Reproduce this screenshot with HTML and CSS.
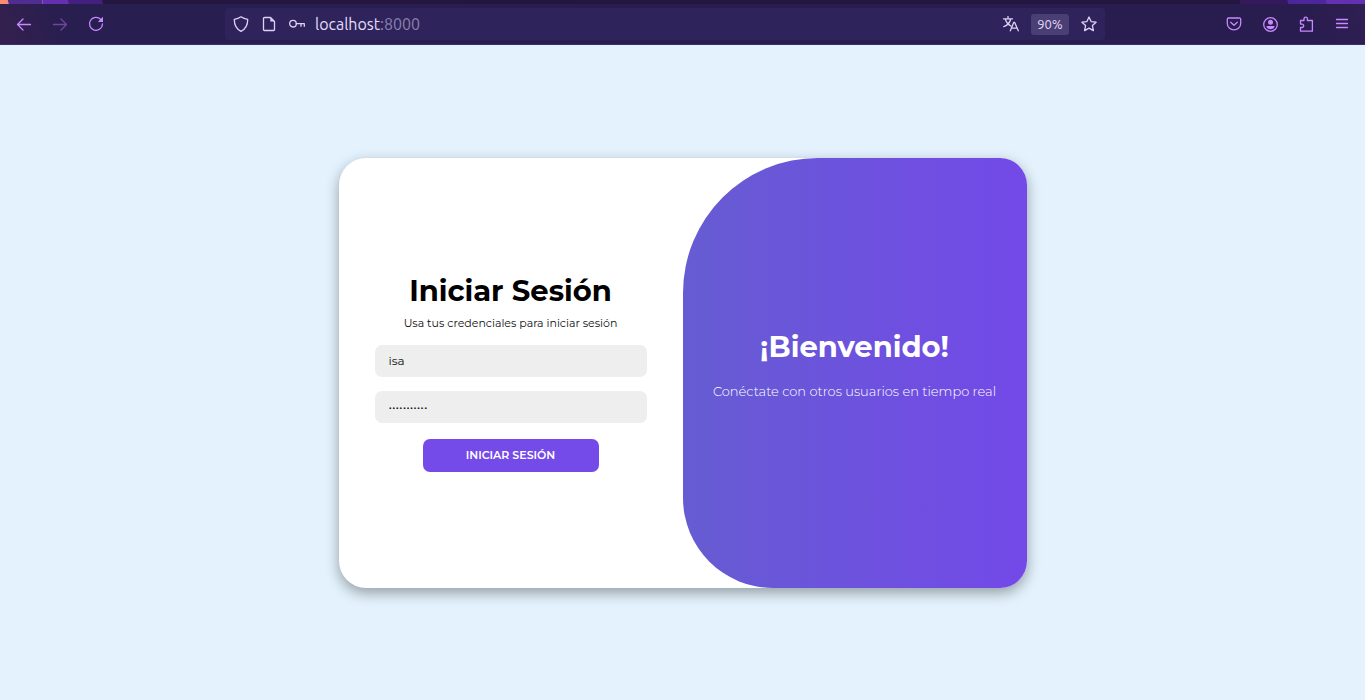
FILE: index.html
```html
<!DOCTYPE html>
<html lang="es">
<head>
<meta charset="utf-8">
<meta name="viewport" content="width=device-width, initial-scale=1">
<title>Iniciar Sesión</title>
<link rel="stylesheet" href="styles.css">
</head>
<body>
<header class="browser">
  <div class="tab-strip"></div>
  <div class="toolbar">
    <div class="nav-group">
      <button class="icon-button" type="button" aria-label="Atrás"><svg viewBox="0 0 16 16"><path d="M14.500 8.500H1.500M7 3 1.500 8.500 7 14"/></svg></button>
      <button class="icon-button dim" type="button" aria-label="Adelante"><svg viewBox="0 0 16 16"><path d="M1.500 8.500h13M9 3l5.500 5.500L9 14"/></svg></button>
      <button class="icon-button" type="button" aria-label="Recargar"><svg viewBox="0 0 16 16"><path d="M12.600 3.200A6.500 6.500 0 1 0 14.500 8"/><path class="solid" d="M15 .8V6H9.800z"/></svg></button>
    </div>
    <div class="url-bar">
      <svg viewBox="0 0 16 16"><path d="M8 .8c2 1.400 4.200 2.200 6.700 2.500C14.800 8.700 13 12.800 8 15.300 3 12.800 1.200 8.700 1.300 3.300 3.800 3 6 2.200 8 .8z"/></svg>
      <svg viewBox="0 0 16 16"><path d="M9.500 1.500h-6a1 1 0 0 0-1 1v11a1 1 0 0 0 1 1h9a1 1 0 0 0 1-1v-8z"/><path class="solid" d="M9.300 1v4.500h4.500z"/></svg>
      <svg viewBox="0 0 16 16"><circle cx="4" cy="7.700" r="3.300"/><path d="M7.300 7.700h8v2.600M12 7.700v2.600"/></svg>
      <span class="address">localhost<span class="port">:8000</span></span>
      <svg viewBox="0 0 16 16"><path d="M.5 2.800h9M5 .5v2.300M2.300 3c.8 3 3 5.500 5.500 7M7.700 3C7 6.500 4.300 9.300.8 10.700M7.300 14.800l3.500-8.500h.8l3.700 8.500M8.600 12.200h5.600"/></svg>
      <button class="zoom-level" type="button">90%</button>
      <svg viewBox="0 0 16 16"><path d="m8 1 2.100 4.600 5 .6-3.700 3.400 1 5L8 12.100l-4.400 2.500 1-5L.9 6.200l5-.6z"/></svg>
    </div>
    <div class="nav-group end">
      <button class="icon-button" type="button" aria-label="Pocket"><svg viewBox="0 0 16 16"><path d="M2.500 2h11a1.200 1.200 0 0 1 1.200 1.200v4.300a6.700 6.300 0 0 1-13.400 0V3.200A1.200 1.200 0 0 1 2.500 2zM4.700 6.200 8 9.300l3.300-3.100"/></svg></button>
      <button class="icon-button" type="button" aria-label="Cuenta"><svg viewBox="0 0 16 16"><circle cx="8.500" cy="8.500" r="6.800"/><circle class="solid" cx="8.500" cy="6.300" r="2.500"/><path class="solid" d="M4.300 9.900h8.400c-.4 2-2 3.300-4.200 3.300s-3.800-1.300-4.200-3.300z"/></svg></button>
      <button class="icon-button" type="button" aria-label="Extensiones"><svg viewBox="0 0 16 16"><path d="M2.500 7V4.500H6V2.800a1.700 1.700 0 0 1 3.400 0v1.700h5v10.700H2.500v-3.700H4a1.700 1.700 0 0 0 0-3.400H2.500z"/></svg></button>
      <button class="icon-button" type="button" aria-label="Menú"><svg viewBox="0 0 16 16"><path d="M2.500 3.500h11M2.500 7.500h11M2.500 11.500h11"/></svg></button>
    </div>
  </div>
</header>
<main class="page">
  <div class="card">
    <form class="login">
      <h1 class="title">Iniciar Sesión</h1>
      <p class="hint">Usa tus credenciales para iniciar sesión</p>
      <input class="field" type="text" value="isa" aria-label="Usuario">
      <input class="field password" type="password" value="contrasenia" aria-label="Contraseña">
      <button class="submit" type="button">INICIAR SESIÓN</button>
    </form>
    <section class="welcome">
      <h2 class="title">¡Bienvenido!</h2>
      <p class="tagline">Conéctate con otros usuarios en tiempo real</p>
    </section>
  </div>
</main>
</body>
</html>
```
FILE: styles.css
```css
* { box-sizing: border-box; margin: 0; }

body {
  min-height: 100vh;
  display: flex;
  flex-direction: column;
  background: #e3f2fd;
  font-family: Montserrat, Inter, sans-serif;
}

button { border: 0; cursor: pointer; }

.browser {
  background: #291d4f;
  border-bottom: 1px solid #3c2c70;
  font-family: Ubuntu, "Noto Sans", sans-serif;
}

.tab-strip {
  height: 4px;
  background: linear-gradient(75deg, #ff8b73 8px, #4f2d91 9px, #4f2d91 41px, #8054b3 41px, #8054b3 42px, #6430b0 42px, #6430b0 66px, #432080 67px, #432080 99px, #251541 100px, #251541 1198px, #35195d 1199px, #35195d 1244px, #4c269a 1245px, #4c269a 1281px, #6330b1 1282px);
}

.toolbar {
  display: grid;
  grid-template-columns: 225px 1fr 260px;
  align-items: center;
  padding: 4px 0;
  background: linear-gradient(75deg, #35204e, #291e50 60px, #291c4e 1270px, #2f1f54);
}

.toolbar svg {
  width: 16px;
  height: 16px;
  flex: none;
  display: block;
  fill: none;
  stroke: currentColor;
  stroke-width: 1.3;
  stroke-linecap: round;
  stroke-linejoin: round;
}

.toolbar .solid { fill: currentColor; stroke: none; }

.nav-group { display: flex; gap: 20px; padding: 0 16px; }
.nav-group.end { justify-content: flex-end; padding: 0 15px; }

.icon-button { padding: 0; background: none; color: #c689ff; }
.icon-button.dim { color: #70479b; }

.url-bar {
  height: 32px;
  display: flex;
  align-items: center;
  gap: 12px;
  padding: 0 8px;
  border-radius: 4px;
  background: #2e245b;
  color: #ddd2f5;
}

.address { flex: 1; margin-left: -2px; font-size: 16px; line-height: 20px; color: #e5ddf8; }
.port { color: #8c81ad; }

.zoom-level {
  width: 38px;
  height: 21px;
  padding: 0;
  border-radius: 3px;
  background: #4a3f74;
  color: #e2d8f6;
  font: 13px/21px Ubuntu, "Noto Sans", sans-serif;
}

.page {
  flex: 1;
  display: flex;
  align-items: center;
  justify-content: center;
  padding: 24px;
}

.card {
  width: 100%;
  max-width: 688px;
  min-height: 430px;
  display: grid;
  grid-template-columns: 1fr 1fr;
  overflow: hidden;
  border-radius: 27px;
  background: #fff;
  box-shadow: 0 5px 14px rgba(0, 0, 0, .35);
}

.login {
  display: flex;
  flex-direction: column;
  justify-content: center;
  padding: 0 36px;
  color: #000;
}

.title { font-size: 29px; line-height: 36px; font-weight: 700; text-align: center; }

.hint {
  margin: 6px 0 14px;
  font-size: 11px;
  line-height: 16px;
  text-align: center;
  color: #111;
}

.field {
  width: 100%;
  height: 32px;
  margin-bottom: 14px;
  padding: 0 14px 2px;
  border: 0;
  border-radius: 7px;
  outline: 0;
  background: #eee;
  color: #111;
  font: 12px Montserrat, Inter, sans-serif;
}

.password { margin-bottom: 16px; }

.submit {
  align-self: center;
  width: 176px;
  height: 33px;
  padding: 0 0 2px;
  border-radius: 7px;
  background: #744ae8;
  color: #fff;
  font: 600 11px Montserrat, Inter, sans-serif;
}

.welcome {
  display: flex;
  flex-direction: column;
  align-items: center;
  justify-content: center;
  padding: 0 20px;
  border-radius: 135px 0 0 90px;
  background: linear-gradient(to right, #665cd2, #7349e8);
  color: #fff;
}

.tagline {
  margin: 18px 0;
  font-size: 13px;
  line-height: 16px;
  font-weight: 300;
  text-align: center;
}

@media (max-width: 640px) {
  .toolbar { grid-template-columns: auto 1fr auto; }
  .card { grid-template-columns: 1fr; }
  .welcome { min-height: 240px; border-radius: 90px 90px 0 0; }
}
```
